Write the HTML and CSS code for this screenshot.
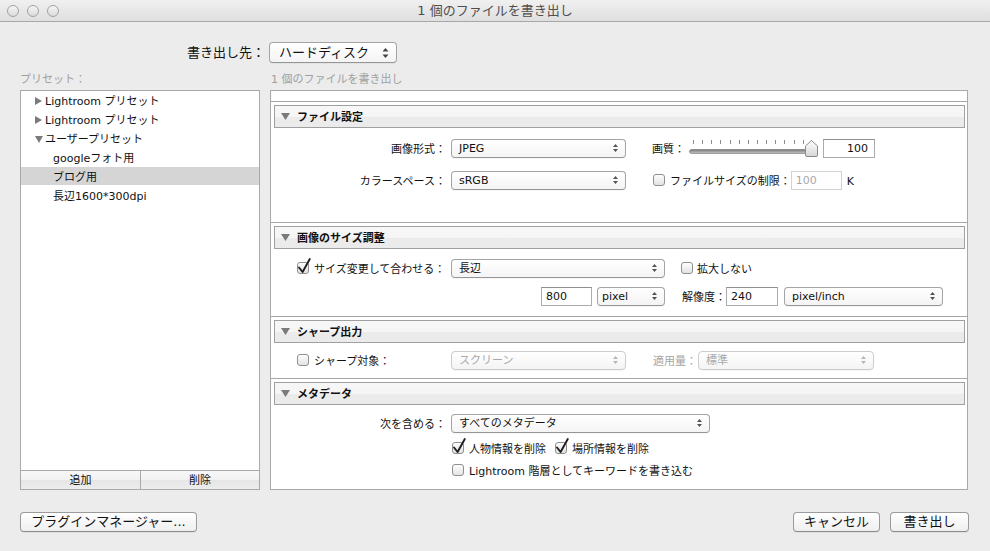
FILE: index.html
```html
<!DOCTYPE html>
<html lang="ja">
<head>
<meta charset="utf-8">
<title>1 個のファイルを書き出し</title>
<link rel="stylesheet" href="styles.css">
</head>
<body>
<div class="window">
  <header class="titlebar">
    <div class="lights"><span class="light"></span><span class="light"></span><span class="light"></span></div>
    <div class="title">1 個のファイルを書き出し</div>
    <div></div>
  </header>

  <main class="content">
    <div class="dest-row">
      <span class="dest-label">書き出し先：</span>
      <div class="popup popup-big"><span>ハードディスク</span><svg class="arr arr-big" width="7" height="10" viewBox="0 0 7 10"><path d="M3.5 0 L6.5 3.6 H0.5 Z M0.5 6.4 H6.5 L3.5 10 Z" fill="#444"/></svg></div>
    </div>

    <div class="captions">
      <span>プリセット：</span>
      <span class="cap-right">1 個のファイルを書き出し</span>
    </div>

    <div class="panels">
      <div class="presets">
        <ul class="tree">
          <li class="node"><svg class="tri" width="7" height="8" viewBox="0 0 7 8"><path d="M0 0 L7 4 L0 8 Z" fill="#7b7b7b"/></svg><span class="t">Lightroom プリセット</span></li>
          <li class="node"><svg class="tri" width="7" height="8" viewBox="0 0 7 8"><path d="M0 0 L7 4 L0 8 Z" fill="#7b7b7b"/></svg><span class="t">Lightroom プリセット</span></li>
          <li class="node"><svg class="tri tri-open" width="8" height="7" viewBox="0 0 8 7"><path d="M0 0 H8 L4 7 Z" fill="#7b7b7b"/></svg><span class="t">ユーザープリセット</span></li>
          <li class="leaf"><span class="t">googleフォト用</span></li>
          <li class="leaf selected"><span class="t">ブログ用</span></li>
          <li class="leaf"><span class="t">長辺1600*300dpi</span></li>
        </ul>
        <div class="tree-buttons">
          <button class="tree-btn">追加</button>
          <button class="tree-btn">削除</button>
        </div>
      </div>

      <div class="settings">
        <div class="strip"></div>

        <section class="sec">
          <div class="sec-head"><svg class="sec-tri" width="9" height="7" viewBox="0 0 9 7"><path d="M0 0 H9 L4.5 7 Z" fill="#7a7a7a"/></svg><span class="t">ファイル設定</span></div>
          <div class="sec-body body-file">
            <div class="row">
              <span class="lab">画像形式：</span>
              <div class="popup w-175"><span class="t">JPEG</span><svg class="arr" width="5" height="8" viewBox="0 0 5 8"><path d="M2.5 0 L5 3 H0 Z M0 5 H5 L2.5 8 Z" fill="#555"/></svg></div>
              <span class="txt quality-label">画質：</span>
              <span class="slider">
                <svg width="130" height="20" viewBox="0 0 130 20">
                  <defs>
                    <linearGradient id="trk" x1="0" y1="0" x2="0" y2="1"><stop offset="0" stop-color="#767676"/><stop offset="1" stop-color="#c8c8c8"/></linearGradient>
                    <linearGradient id="thm" x1="0" y1="0" x2="0" y2="1"><stop offset="0" stop-color="#ffffff"/><stop offset="1" stop-color="#d6d6d6"/></linearGradient>
                  </defs>
                  <g stroke="#8c8c8c" stroke-width="1">
                    <line x1="4.5" y1="2" x2="4.5" y2="6"/><line x1="13.5" y1="2" x2="13.5" y2="6"/><line x1="22.5" y1="2" x2="22.5" y2="6"/><line x1="31.5" y1="2" x2="31.5" y2="6"/><line x1="41.5" y1="2" x2="41.5" y2="6"/><line x1="50.5" y1="2" x2="50.5" y2="6"/><line x1="59.5" y1="2" x2="59.5" y2="6"/><line x1="68.5" y1="2" x2="68.5" y2="6"/><line x1="77.5" y1="2" x2="77.5" y2="6"/><line x1="86.5" y1="2" x2="86.5" y2="6"/><line x1="95.5" y1="2" x2="95.5" y2="6"/><line x1="105.5" y1="2" x2="105.5" y2="6"/><line x1="114.5" y1="2" x2="114.5" y2="6"/><line x1="122.5" y1="2" x2="122.5" y2="6"/>
                  </g>
                  <rect x="0.5" y="11.5" width="124" height="4" rx="2" fill="url(#trk)" stroke="#6f6f6f" stroke-width="0.6"/>
                  <path d="M122.5 2.5 L128.5 8 L128.5 17 Q128.5 18.5 127 18.5 L118 18.5 Q116.5 18.5 116.5 17 L116.5 8 Z" fill="url(#thm)" stroke="#8a8a8a"/>
                </svg>
              </span>
              <span class="field field-num w-52"><span class="t">100</span></span>
            </div>
            <div class="row">
              <span class="lab">カラースペース：</span>
              <div class="popup w-175"><span class="t">sRGB</span><svg class="arr" width="5" height="8" viewBox="0 0 5 8"><path d="M2.5 0 L5 3 H0 Z M0 5 H5 L2.5 8 Z" fill="#555"/></svg></div>
              <span class="cb limit-cb"></span><span class="cb-text">ファイルサイズの制限：</span>
              <span class="field field-disabled w-51"><span class="t">100</span></span>
              <span class="txt unit">K</span>
            </div>
          </div>
        </section>

        <section class="sec">
          <div class="sec-head"><svg class="sec-tri" width="9" height="7" viewBox="0 0 9 7"><path d="M0 0 H9 L4.5 7 Z" fill="#7a7a7a"/></svg><span class="t">画像のサイズ調整</span></div>
          <div class="sec-body body-size">
            <div class="row">
              <span class="lab lab-check"><span class="cb"><svg class="check" width="16" height="17" viewBox="0 0 16 17"><path d="M3 10.5 L6.6 15 L13.8 2" fill="none" stroke="#1e1e1e" stroke-width="1.9" stroke-linecap="round" stroke-linejoin="round"/></svg></span><span class="cb-text">サイズ変更して合わせる：</span></span>
              <div class="popup w-214"><span class="t">長辺</span><svg class="arr" width="5" height="8" viewBox="0 0 5 8"><path d="M2.5 0 L5 3 H0 Z M0 5 H5 L2.5 8 Z" fill="#555"/></svg></div>
              <span class="cb enlarge-cb"></span><span class="cb-text">拡大しない</span>
            </div>
            <div class="row row-2">
              <span class="lab"></span>
              <div class="size-group">
                <span class="field w-51"><span class="t">800</span></span>
                <div class="popup popup-tight w-68"><span class="t">pixel</span><svg class="arr" width="5" height="8" viewBox="0 0 5 8"><path d="M2.5 0 L5 3 H0 Z M0 5 H5 L2.5 8 Z" fill="#555"/></svg></div>
              </div>
              <span class="txt res-label">解像度：</span>
              <span class="field w-52"><span class="t">240</span></span>
              <div class="popup w-159 res-unit"><span class="t">pixel/inch</span><svg class="arr" width="5" height="8" viewBox="0 0 5 8"><path d="M2.5 0 L5 3 H0 Z M0 5 H5 L2.5 8 Z" fill="#555"/></svg></div>
            </div>
          </div>
        </section>

        <section class="sec">
          <div class="sec-head"><svg class="sec-tri" width="9" height="7" viewBox="0 0 9 7"><path d="M0 0 H9 L4.5 7 Z" fill="#7a7a7a"/></svg><span class="t">シャープ出力</span></div>
          <div class="sec-body body-sharp">
            <div class="row">
              <span class="lab lab-check"><span class="cb"></span><span class="cb-text">シャープ対象：</span></span>
              <div class="popup popup-disabled w-175"><span class="t">スクリーン</span><svg class="arr" width="5" height="8" viewBox="0 0 5 8"><path d="M2.5 0 L5 3 H0 Z M0 5 H5 L2.5 8 Z" fill="#b5b5b5"/></svg></div>
              <span class="txt txt-disabled amount-label">適用量：</span>
              <div class="popup popup-disabled w-176 amount-pop"><span class="t">標準</span><svg class="arr" width="5" height="8" viewBox="0 0 5 8"><path d="M2.5 0 L5 3 H0 Z M0 5 H5 L2.5 8 Z" fill="#b5b5b5"/></svg></div>
            </div>
          </div>
        </section>

        <section class="sec sec-last">
          <div class="sec-head"><svg class="sec-tri" width="9" height="7" viewBox="0 0 9 7"><path d="M0 0 H9 L4.5 7 Z" fill="#7a7a7a"/></svg><span class="t">メタデータ</span></div>
          <div class="sec-body body-meta">
            <div class="row">
              <span class="lab">次を含める：</span>
              <div class="popup w-259"><span class="t">すべてのメタデータ</span><svg class="arr" width="5" height="8" viewBox="0 0 5 8"><path d="M2.5 0 L5 3 H0 Z M0 5 H5 L2.5 8 Z" fill="#555"/></svg></div>
            </div>
            <div class="row row-check row-people">
              <span class="cb"><svg class="check" width="16" height="17" viewBox="0 0 16 17"><path d="M3 10.5 L6.6 15 L13.8 2" fill="none" stroke="#1e1e1e" stroke-width="1.9" stroke-linecap="round" stroke-linejoin="round"/></svg></span><span class="cb-text">人物情報を削除</span>
              <span class="cb place-cb"><svg class="check" width="16" height="17" viewBox="0 0 16 17"><path d="M3 10.5 L6.6 15 L13.8 2" fill="none" stroke="#1e1e1e" stroke-width="1.9" stroke-linecap="round" stroke-linejoin="round"/></svg></span><span class="cb-text">場所情報を削除</span>
            </div>
            <div class="row row-check row-keywords">
              <span class="cb"></span><span class="cb-text">Lightroom 階層としてキーワードを書き込む</span>
            </div>
          </div>
        </section>
      </div>
    </div>

    <footer class="footer">
      <button class="btn btn-plugin">プラグインマネージャー...</button>
      <div class="footer-right">
        <button class="btn btn-cancel">キャンセル</button>
        <button class="btn btn-export">書き出し</button>
      </div>
    </footer>
  </main>
</div>
</body>
</html>
```

FILE: styles.css
```css
* { box-sizing: border-box; }

html, body {
  margin: 0;
  padding: 0;
}

body {
  width: 990px;
  height: 551px;
  overflow: hidden;
  background: #ececec;
  font-family: "DejaVu Sans", "Noto Sans CJK JP", sans-serif;
  font-size: 11px;
  line-height: 14px;
  color: #111;
}

/* ---------- title bar ---------- */
.titlebar {
  height: 22px;
  display: grid;
  grid-template-columns: 1fr auto 1fr;
  align-items: center;
  background: linear-gradient(#f0f0f0, #dfdfdf);
  border-bottom: 1px solid #a8a8a8;
}

.lights {
  display: flex;
  gap: 8px;
  padding-left: 7px;
}

.light {
  width: 12px;
  height: 12px;
  border-radius: 50%;
  border: 1px solid #a2a2a2;
  background: linear-gradient(#f6f6f6, #dadada);
}

.title {
  font-size: 13px;
  color: #4f4f4f;
  line-height: 16px;
}

/* ---------- content ---------- */
.content {
  padding: 0 22px 0 20px;
}

.dest-row {
  display: grid;
  grid-template-columns: 240px 1fr;
  column-gap: 10px;
  align-items: center;
  margin-top: 20px;
  height: 21px;
}

.dest-label {
  justify-self: end;
  margin-right: -5px;
  font-size: 13px;
  white-space: nowrap;
}

.captions {
  display: grid;
  grid-template-columns: 240px 1fr;
  column-gap: 10px;
  margin-top: 10px;
  height: 14px;
  color: #a0a0a0;
}

.cap-right { padding-left: 1px; }

.panels {
  display: grid;
  grid-template-columns: 240px 1fr;
  column-gap: 10px;
  margin-top: 3px;
  height: 400px;
}

/* small downward nudge of text inside centered flex items */
.t { padding-top: 2px; }

/* ---------- preset tree ---------- */
.presets {
  display: flex;
  flex-direction: column;
}

.tree {
  flex: 1;
  margin: 0;
  padding: 0;
  list-style: none;
  background: #fff;
  border: 1px solid #a9a9a9;
  border-bottom: none;
}

.tree li {
  height: 19px;
  display: flex;
  align-items: center;
  white-space: nowrap;
}

.tree .t { padding-top: 3px; }

.node { padding-left: 14px; }
.tri { margin-right: 3px; flex-shrink: 0; margin-top: 1px; }
.tri-open { margin-right: 2px; }
.leaf { padding-left: 32px; }
.tree li.selected { background: #d5d5d5; height: 18px; margin-bottom: 1px; }

.tree-buttons {
  display: grid;
  grid-template-columns: 1fr 1fr;
  height: 20px;
  border: 1px solid #a9a9a9;
}

.tree-btn {
  font: inherit;
  color: #111;
  padding: 1px 0 0;
  margin: 0;
  border: none;
  background: linear-gradient(#f8f8f8 0%, #f1f1f1 50%, #e6e6e6 51%, #ececec 100%);
  text-align: center;
  line-height: 17px;
}

.tree-btn + .tree-btn { border-left: 1px solid #a9a9a9; }

/* ---------- settings panel ---------- */
.settings {
  display: flex;
  flex-direction: column;
  background: #fff;
  border: 1px solid #a9a9a9;
}

.strip { height: 10px; }

.sec {
  border-top: 1px solid #a6a6a6;
  padding-top: 3px;
}

.sec-last {
  flex: 1;
  display: flex;
  flex-direction: column;
}

.sec-head {
  height: 23px;
  margin: 0 2px 0 3px;
  border: 1px solid #a0a0a0;
  background: linear-gradient(#f7f7f7 0%, #f5f5f5 50%, #ebebeb 51%, #ebebeb 100%);
  display: flex;
  align-items: center;
  padding-left: 6px;
  font-weight: bold;
  white-space: nowrap;
}

.sec-tri { margin-right: 7px; flex-shrink: 0; }

.sec-body { display: flex; flex-direction: column; }
.body-file { height: 94px; padding-top: 10px; gap: 12px; }
.body-size { height: 67px; padding-top: 9px; gap: 8px; }
.body-sharp { height: 35px; padding-top: 7px; }
.body-meta { flex: 1; padding-top: 8px; }

.row {
  display: flex;
  align-items: center;
  height: 20px;
  white-space: nowrap;
}

.lab, .txt, .cb-text { padding-top: 3px; }

.lab {
  width: 175px;
  margin-right: 5px;
  flex-shrink: 0;
  display: flex;
  justify-content: flex-end;
  align-items: center;
}

.lab-check {
  justify-content: flex-start;
  padding-left: 26px;
  padding-top: 0;
}

.txt-disabled { color: #a5a5a5; }

/* popups */
.popup {
  height: 19px;
  flex-shrink: 0;
  display: flex;
  align-items: center;
  justify-content: space-between;
  padding: 0 7px 0 7px;
  border: 1px solid #a4a4a4;
  border-bottom-color: #969696;
  border-radius: 4px;
  background: linear-gradient(#ffffff, #f4f4f4);
  box-shadow: 0 1px 0 rgba(0, 0, 0, 0.04);
  color: #111;
}

.popup-big {
  height: 21px;
  width: 128px;
  margin-left: -1px;
  font-size: 13px;
  padding: 0 7px 0 9px;
}

.popup-tight { padding-left: 4px; }

.popup-disabled {
  color: #a8a8a8;
  border-color: #cdcdcd;
}

.arr { flex-shrink: 0; }

.w-175 { width: 175px; }
.w-176 { width: 176px; }
.w-214 { width: 214px; }
.w-259 { width: 259px; }
.w-68 { width: 68px; }
.w-159 { width: 159px; }
.w-51 { width: 51px; }
.w-52 { width: 52px; }

/* fields */
.field {
  height: 19px;
  flex-shrink: 0;
  display: flex;
  align-items: center;
  padding: 0 4px;
  background: #fff;
  border: 1px solid #ababab;
  border-top-color: #8f8f8f;
}

.field-num { justify-content: flex-end; padding-right: 6px; }

.field-disabled {
  color: #a8a8a8;
  border-color: #d2d2d2;
}

/* checkbox */
.cb {
  position: relative;
  width: 12px;
  height: 12px;
  flex-shrink: 0;
  border: 1px solid #8f8f8f;
  border-radius: 3px;
  background: linear-gradient(#fdfdfd, #e3e3e3);
}

.check {
  position: absolute;
  left: -2px;
  top: -6px;
}

.cb-text { margin-left: 5px; }

/* section specific */
.quality-label { margin-left: 26px; }
.slider { margin-left: 4px; width: 130px; height: 20px; display: flex; }
.slider + .field { margin-left: 4px; }
.limit-cb { margin-left: 27px; }
.unit { margin-left: 5px; }

.enlarge-cb { margin-left: 16px; }
.enlarge-cb + .cb-text { margin-left: 4px; }

.size-group {
  width: 214px;
  display: flex;
  justify-content: flex-end;
  gap: 5px;
}

.res-label { margin-left: 17px; }
.res-unit { margin-left: 6px; }

.amount-label { margin-left: 27px; }
.amount-pop { margin-left: 1px; }

.row-check {
  height: 18px;
  padding-left: 181px;
}

.row-people { margin-top: 6px; }
.row-keywords { margin-top: 4px; }
.place-cb { margin-left: 9px; }

/* ---------- footer ---------- */
.footer {
  display: flex;
  justify-content: space-between;
  margin-top: 22px;
}

.footer-right {
  display: flex;
  gap: 10px;
  margin-right: -1px;
}

.btn {
  height: 20px;
  padding: 0;
  margin: 0;
  font-family: inherit;
  font-size: 13px;
  line-height: 18px;
  color: #111;
  text-align: center;
  border: 1px solid #9b9b9b;
  border-bottom-color: #8a8a8a;
  border-radius: 4px;
  background: linear-gradient(#ffffff, #efefef);
  box-shadow: 0 1px 0 rgba(0, 0, 0, 0.05);
}

.btn-plugin { width: 177px; }
.btn-cancel { width: 87px; }
.btn-export { width: 79px; }
```
